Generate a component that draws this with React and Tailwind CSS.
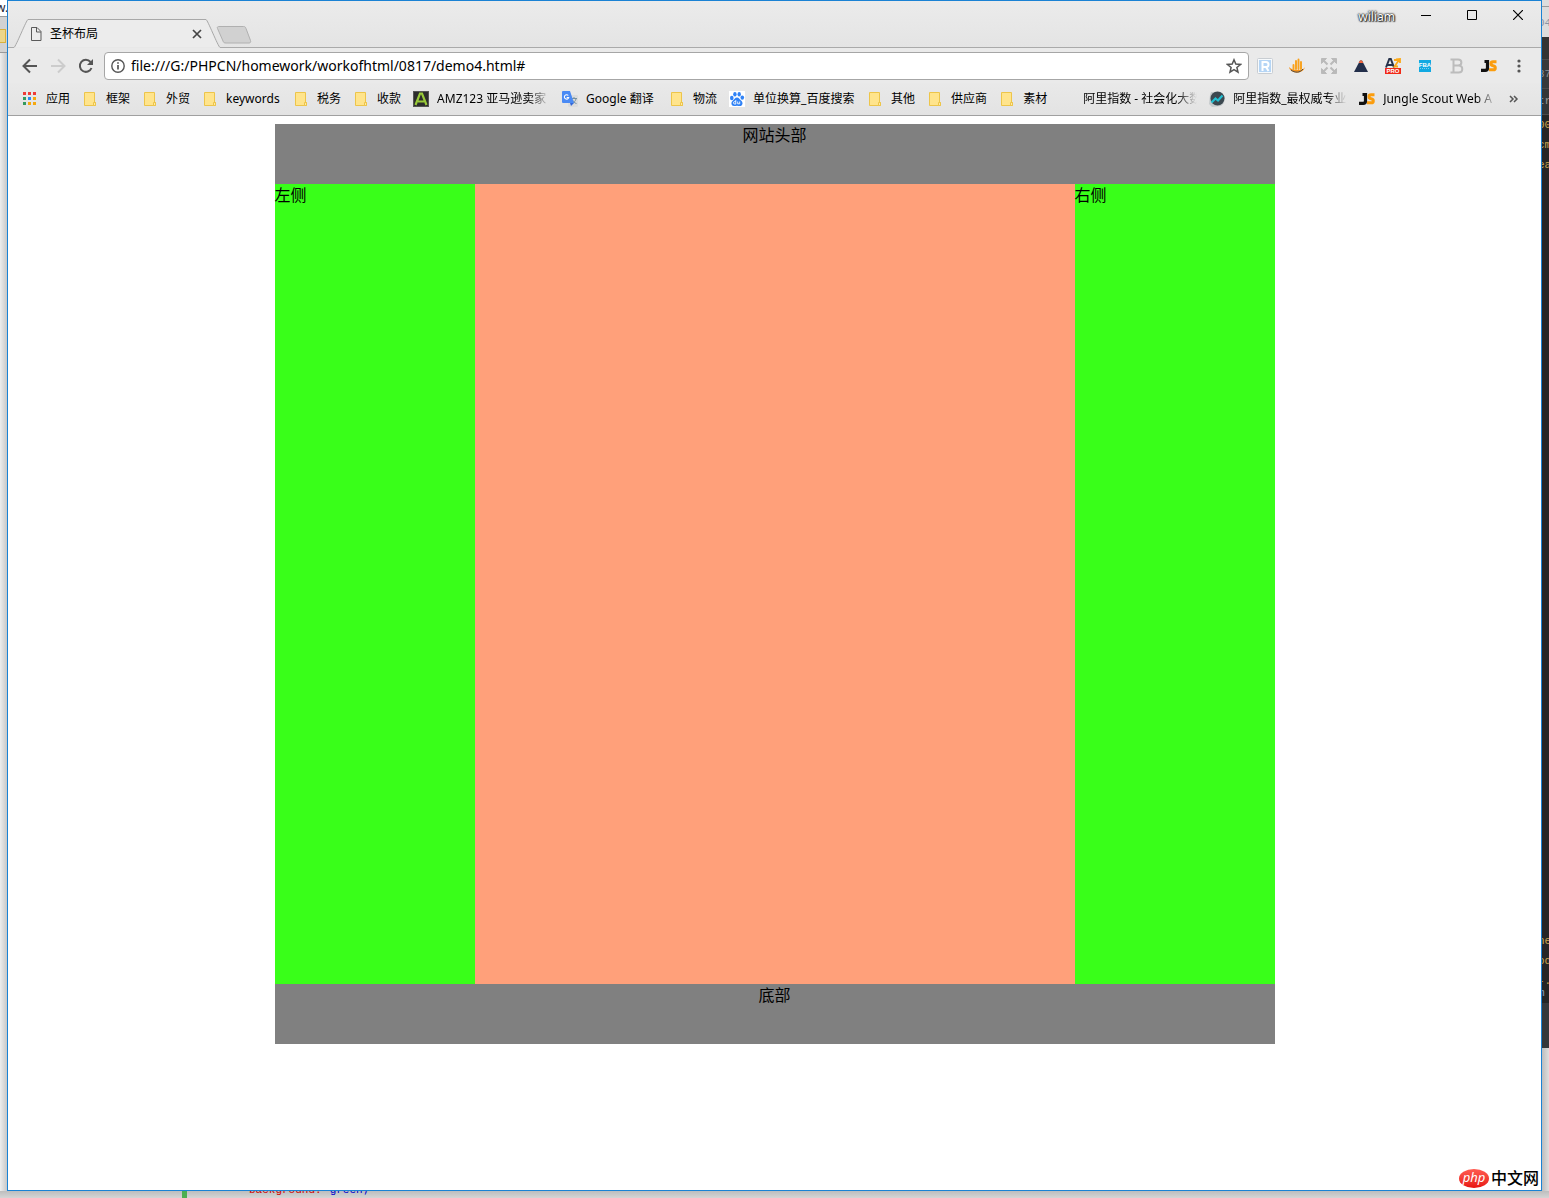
import React from "react";

const UI = "font-['Noto_Sans','Noto_Sans_CJK_SC',sans-serif]";

function FolderIcon() {
  return (
    <svg width="16" height="16" viewBox="0 0 16 16" aria-hidden="true">
      <path d="M2.5 1.5h10v10h1v3h-11z" fill="#ffe48c" stroke="#edc54a" />
      <path d="M11.5 14.5v-3h2v3z" fill="#ffe9a6" stroke="#edc54a" />
    </svg>
  );
}

function AppsIcon() {
  const colors = ["#ef3b36", "#ef3b36", "#ef3b36", "#349a5e", "#2a8bf2", "#f5a80f", "#349a5e", "#f5a80f", "#f5a80f"];
  return (
    <svg width="16" height="16" viewBox="0 0 16 16" aria-hidden="true">
      {colors.map((c, i) => (
        <rect key={i} x={1 + (i % 3) * 5} y={1 + Math.floor(i / 3) * 5} width="3" height="3" fill={c} />
      ))}
    </svg>
  );
}

function AmzIcon() {
  return (
    <svg width="16" height="16" viewBox="0 0 16 16" aria-hidden="true">
      <rect width="16" height="16" fill="#2d2d2d" />
      <rect x="0.5" y="0.5" width="15" height="15" fill="none" stroke="#555" />
      <path d="M2.500 14L7 2.500h2L13.500 14M5 10.500h6" fill="none" stroke="#9acb3a" strokeWidth="2.200" />
    </svg>
  );
}

function TranslateIcon() {
  return (
    <svg width="16" height="16" viewBox="0 0 16 16" aria-hidden="true">
      <rect x="6" y="4" width="10" height="12" rx="1" fill="#dcdcdc" />
      <path d="M9 7.5h6M12 6v1.500M14 8c-.5 2-2 3.500-4 4.500M10.500 9c1 2 2 3 4 3.500" stroke="#7590a0" fill="none" />
      <path d="M1 0h7l4 12H1a1 1 0 0 1-1-1V1a1 1 0 0 1 1-1z" fill="#4a8af4" />
      <path d="M8 12h4l-3 3z" fill="#3367d6" />
      <path d="M6.300 4.500A2.200 2.200 0 1 0 6.700 6.500H4.700" stroke="#fff" strokeWidth="1.100" fill="none" />
    </svg>
  );
}

function BaiduIcon() {
  return (
    <svg width="16" height="16" viewBox="0 0 16 16" aria-hidden="true">
      <rect width="16" height="16" fill="#fff" />
      <g fill="#2f82f6">
        <ellipse cx="2.800" cy="7" rx="1.800" ry="2.200" />
        <ellipse cx="5.900" cy="3.300" rx="1.700" ry="2.300" />
        <ellipse cx="10.200" cy="3.300" rx="1.700" ry="2.300" />
        <ellipse cx="13.300" cy="6.600" rx="1.800" ry="2.200" />
        <path d="M8 6.500c2 0 2.800 2 4.300 3.200 2.200 1.900 1.300 5.300-1.300 5.300-1.200 0-2-.3-3-.3s-1.800.3-3 .3c-2.800 0-3.400-3.400-1.300-5.200C5.200 8.500 6 6.500 8 6.500z" />
      </g>
      <path d="M6.800 9v4H5.700a1.200 1.200 0 0 1 0-2.400h1M8.700 10.500v2.300h2v-2.300" stroke="#fff" fill="none" strokeWidth="0.900" />
    </svg>
  );
}

function TrendIcon() {
  return (
    <svg width="16" height="16" viewBox="0 0 16 16" aria-hidden="true">
      <path d="M2 1h10l4 5-1 6-3 3-9 1-3-3 1-9z" fill="#c5cacc" />
      <circle cx="8.500" cy="7.500" r="7" fill="#3c4850" />
      <path d="M2.500 11.500l4-4 2.500 2 4.500-5" fill="none" stroke="#22bfd2" strokeWidth="2.200" />
    </svg>
  );
}

function JsIcon() {
  return (
    <svg width="16" height="16" viewBox="0 0 16 16" aria-hidden="true">
      <path d="M3.500 3.500h3V10c0 1.400-.9 2.300-2.300 2.300H0" fill="none" stroke="#111" strokeWidth="3.200" />
      <path d="M15.500 3.800h-3.500c-2.500 0-2.900 3.500.1 3.900 3 .4 2.800 4.100.2 4.100H8" fill="none" stroke="#fb9d0e" strokeWidth="3" />
    </svg>
  );
}

const fade = "overflow-hidden [mask-image:linear-gradient(to_right,black_82%,transparent)]";

const bookmarks = [
  { t: "应用", icon: AppsIcon },
  { t: "框架", icon: FolderIcon },
  { t: "外贸", icon: FolderIcon },
  { t: "keywords", icon: FolderIcon, w: "w-[55px]" },
  { t: "税务", icon: FolderIcon },
  { t: "收款", icon: FolderIcon },
  { t: "AMZ123 亚马逊卖家", icon: AmzIcon, w: "w-[113px] " + fade },
  { t: "Google 翻译", icon: TranslateIcon, w: "w-[71px]" },
  { t: "物流", icon: FolderIcon },
  { t: "单位换算_百度搜索", icon: BaiduIcon, w: "w-[102px]" },
  { t: "其他", icon: FolderIcon },
  { t: "供应商", icon: FolderIcon },
  { t: "素材", icon: FolderIcon },
  { t: "阿里指数 - 社会化大数", w: "w-[114px] " + fade },
  { t: "阿里指数_最权威专业", icon: TrendIcon, w: "w-[114px] " + fade },
  { t: "Jungle Scout Web A", icon: JsIcon, w: "w-[114px] " + fade },
];

const extensions = [
  {
    name: "R",
    art: (
      <>
        <rect x="0.500" y="0.500" width="15" height="15" rx="1" fill="#f7fafc" stroke="#c8cdd2" />
        <rect x="2" y="2" width="12" height="12" fill="#b5d5f5" />
        <path d="M5.500 13V4h3.500a2.300 2.300 0 0 1 0 5H6M9 9l2.500 4" stroke="#fff" strokeWidth="2" fill="none" />
      </>
    ),
  },
  {
    name: "Analytics",
    art: (
      <>
        <path d="M0 9c1 7 14 8 16 0-2 3-4 3-8 3s-6-1-8-3z" fill="#f7941d" />
        <path d="M2 12c4 3 9 3 12-1" stroke="#4b4b4b" fill="none" />
        <path d="M4.500 11V7M7 11V3M9.500 11V1.500M12 11V4" stroke="#f9a11b" strokeWidth="1.900" strokeLinecap="round" />
      </>
    ),
  },
  {
    name: "Expand",
    art: (
      <g fill="#bababa" stroke="#bababa">
        <path d="M.5.500h5l-5 5zM15.500.500h-5l5 5zM.5 15.500h5l-5-5zM15.500 15.500h-5l5-5z" />
        <path d="M2 2l4.500 4.500M14 2L9.500 6.500M2 14l4.500-4.500M14 14L9.500 9.500" strokeWidth="2" />
      </g>
    ),
  },
  {
    name: "Triangle",
    art: (
      <>
        <path d="M7 2.500h2l6 11.500H1z" fill="#232f4b" />
        <path d="M7 2.500h2l1.300 2.500H5.700z" fill="#f0643c" />
      </>
    ),
  },
  {
    name: "AZ Pro",
    art: (
      <>
        <path d="M1 9.500L4.300 1h1.500L9 9.500M2.500 7h5" stroke="#26324b" strokeWidth="2" fill="none" />
        <path d="M9 2h5L9.500 8.500H13M11 1.500l4-.5v4" stroke="#fba919" strokeWidth="1.800" fill="none" />
        <rect x="0" y="10" width="16" height="6" fill="#f02a17" />
        <text x="8" y="15.200" fontSize="6" fontWeight="700" textAnchor="middle" fontFamily="Liberation Sans" fill="#fff">PRO</text>
      </>
    ),
  },
  {
    name: "FBA",
    art: (
      <>
        <rect x="2" y="2" width="12" height="12" fill="#11a9e2" />
        <text x="8" y="8.500" fontSize="6" fontWeight="700" textAnchor="middle" fontFamily="Liberation Sans" fill="#fff">FBA</text>
        <path d="M3 10.500h10" stroke="#7fd0ef" strokeDasharray="1 1" />
      </>
    ),
  },
  {
    name: "B",
    art: (
      <path d="M1.500 1.500h7.500c4.500 0 4.500 6 0 6H5h4.500c5 0 5 7 0 7h-8M4.500 1.500v13" fill="none" stroke="#bcbcbc" strokeWidth="2" />
    ),
  },
  { name: "Jungle Scout", component: JsIcon },
];

function IconButton({ label, className, children }) {
  return (
    <button aria-label={label} className={"flex h-7 shrink-0 items-center justify-center " + className}>
      {children}
    </button>
  );
}

function TabStrip() {
  return (
    <header className="flex h-[47px] justify-between bg-gradient-to-b from-[#ebebeb] to-[#e4e4e4]">
      <div className="flex min-w-0 flex-1 items-end">
        <div className="h-px w-1.5 bg-[#aaa]" />
        <div className="relative flex h-[29px] w-[206px] items-center pl-4 pr-[17px]">
          <svg className="absolute inset-0" width="206" height="29" viewBox="0 0 206 29" aria-hidden="true">
            <path d="M0 28.500C2 27.500 12.500.500 14 .500h178c1.500 0 12 27 14 28" fill="#ececec" stroke="#a8a8a8" />
          </svg>
          <svg className="relative shrink-0" width="12" height="14" viewBox="0 0 12 14" aria-hidden="true">
            <path d="M1.500.500h5.500l4 4v9h-9.500zM6.500.500v4.500h4.500" fill="none" stroke="#5a5a5a" />
          </svg>
          <span className="relative flex-1 pl-2 text-xs leading-4">圣杯布局</span>
          <button aria-label="Close tab" className="relative">
            <svg width="12" height="12" viewBox="0 0 12 12">
              <path d="M2 2l8 8M10 2l-8 8" stroke="#444" strokeWidth="1.700" />
            </svg>
          </button>
        </div>
        <div className="flex h-[22px] flex-1 items-start border-b border-[#aaa]">
          <button aria-label="New tab" className="-ml-1">
            <svg width="36" height="18" viewBox="0 0 36 18">
              <path d="M2.500.500h25c2 0 2 1 2.500 2l4.500 12c.5 1.500 0 2.500-1.500 2.500H10c-2 0-2.500-.5-3-2L1.500 2.500c-.5-1 0-2 1-2z" fill="#d1d1d1" stroke="#b0b0b0" />
            </svg>
          </button>
        </div>
      </div>
      <div className="flex items-start border-b border-[#aaa]">
        <span className="mr-2 mt-2 text-xs leading-4 text-white [text-shadow:0_0_2px_#222,0_0_1px_#222,0_0_2px_#222,1px_1px_1px_#444]">wiliam</span>
        <IconButton label="Minimize" className="w-[46px]">
          <svg width="10" height="10" viewBox="0 0 10 10"><path d="M0 5.500h10" stroke="#000" /></svg>
        </IconButton>
        <IconButton label="Maximize" className="w-[46px]">
          <svg width="10" height="10" viewBox="0 0 10 10"><path d="M.5.500h9v9h-9z" fill="none" stroke="#000" /></svg>
        </IconButton>
        <IconButton label="Close" className="w-[46px]">
          <svg width="10" height="10" viewBox="0 0 10 10"><path d="M0 0l10 10M10 0L0 10" stroke="#000" strokeWidth="1.200" /></svg>
        </IconButton>
      </div>
    </header>
  );
}

function Toolbar() {
  return (
    <div className="flex h-[35px] items-center bg-[#eaeaea] px-2">
      <IconButton label="Back" className="w-7">
        <svg width="16" height="16" viewBox="0 0 16 16"><path d="M15 8H2M8 1.500L1.500 8 8 14.500" fill="none" stroke="#555" strokeWidth="2" /></svg>
      </IconButton>
      <IconButton label="Forward" className="w-7">
        <svg width="16" height="16" viewBox="0 0 16 16"><path d="M1 8h13M8 1.500L14.500 8 8 14.500" fill="none" stroke="#ccc" strokeWidth="2" /></svg>
      </IconButton>
      <IconButton label="Reload" className="w-7">
        <svg width="16" height="16" viewBox="0 0 16 16">
          <path d="M13.500 10A6 6 0 1 1 12.500 4" fill="none" stroke="#555" strokeWidth="2" />
          <path d="M15 1v6H9z" fill="#555" />
        </svg>
      </IconButton>
      <div className="ml-1 flex h-7 min-w-0 flex-1 items-center rounded-sm border border-[#a6a6a6] bg-white px-1.5">
        <svg className="shrink-0" width="14" height="14" viewBox="0 0 14 14" aria-hidden="true">
          <circle cx="7" cy="7" r="6.200" fill="none" stroke="#555" strokeWidth="1.400" />
          <path d="M7 6v4.500M7 3.300v1.500" stroke="#555" strokeWidth="1.700" />
        </svg>
        <input
          aria-label="Address"
          className="ml-1.5 min-w-0 flex-1 bg-transparent text-sm leading-5 text-black outline-none"
          defaultValue="file:///G:/PHPCN/homework/workofhtml/0817/demo4.html#"
        />
        <button aria-label="Bookmark this page">
          <svg width="16" height="16" viewBox="0 0 16 16">
            <path d="M8 1.800l1.800 4.300 4.700.4-3.600 3 1.100 4.600L8 11.700l-4 2.400 1.100-4.600-3.600-3 4.700-.4z" fill="none" stroke="#555" strokeWidth="1.500" />
          </svg>
        </button>
      </div>
      {extensions.map((e) => (
        <IconButton key={e.name} label={e.name} className="w-8">
          {e.component ? <e.component /> : <svg width="16" height="16" viewBox="0 0 16 16">{e.art}</svg>}
        </IconButton>
      ))}
      <IconButton label="Menu" className="w-7">
        <svg width="4" height="14" viewBox="0 0 4 14"><g fill="#555"><circle cx="2" cy="2" r="1.600" /><circle cx="2" cy="7" r="1.600" /><circle cx="2" cy="12" r="1.600" /></g></svg>
      </IconButton>
    </div>
  );
}

function BookmarksBar() {
  return (
    <nav className="flex h-[33px] items-center gap-3 overflow-hidden border-b border-[#a0a0a0] bg-gradient-to-b from-[#e9e9e9] to-[#e3e3e3] pl-3.5 pr-5">
      {bookmarks.map((b) => (
        <a key={b.t} href="#" className="flex shrink-0 items-center gap-2 whitespace-nowrap text-xs leading-4 text-black">
          <span className="size-4">{b.icon && <b.icon />}</span>
          <span className={b.w}>{b.t}</span>
        </a>
      ))}
      <button aria-label="More bookmarks">
        <svg width="10" height="8" viewBox="0 0 10 8"><path d="M1 1l3 3-3 3M5 1l3 3-3 3" fill="none" stroke="#555" strokeWidth="1.500" /></svg>
      </button>
    </nav>
  );
}

function GrailPage() {
  return (
    <main className="relative flex-1 bg-white px-2 pt-2 text-base leading-[22px] text-black">
      <div className="mx-auto max-w-[1000px]">
        <div className="h-[60px] bg-[#808080] text-center">网站头部</div>
        <div className="flex h-[800px]">
          <div className="w-1/5 bg-[#39ff19]">左侧</div>
          <div className="flex-1 bg-[#ffa07a]" />
          <div className="w-1/5 bg-[#39ff19]">右侧</div>
        </div>
        <div className="h-[60px] bg-[#808080] text-center">底部</div>
      </div>
      <div className="absolute bottom-0.5 right-0.5 flex items-center gap-0.5">
        <span className="flex h-[19px] w-[30px] items-center justify-center rounded-[50%] bg-gradient-to-b from-[#ff5a50] to-[#e80c0c] pb-0.5 text-[13px] italic leading-4 text-white">php</span>
        <span className="text-base font-medium leading-5">中文网</span>
      </div>
    </main>
  );
}

function LeftBackdrop() {
  return (
    <div className="flex w-[7px] shrink-0 flex-col overflow-hidden bg-gradient-to-r from-[#eee] to-[#c8c8c8] text-xs leading-4">
      <div className="h-4 -indent-1 bg-white text-[#223]">w.</div>
      <div className="h-[37px] border-y border-[#999] bg-[#d2d2d2] pt-3">
        <div className="h-3.5 w-1.5 border border-l-0 border-[#d9b13b] bg-[#ecd68a]" />
      </div>
    </div>
  );
}

function RightBackdrop() {
  return (
    <div className="flex w-[7px] shrink-0 flex-col overflow-hidden bg-gradient-to-r from-[#bdbdbd] to-[#dedede] -indent-1 font-['Liberation_Mono',monospace] text-[11px] leading-5">
      <div className="h-[7px] border-b border-[#999] bg-[#ddd]" />
      <div className="h-[30px] bg-[#dcdcdc] pt-1.5 text-[#8a93a5]">04</div>
      <div className="h-[22px] bg-[#333]" />
      <div className="h-[30px] border-y border-[#4a4a4a] bg-[#37393b] pt-1 text-[#8c9196]">37</div>
      <div className="h-[26px] border-b border-[#4a4a4a] bg-[#333537] pt-0.5 text-[#9a9a9a]">tr</div>
      <div className="flex h-[888px] flex-col justify-between bg-[#252525] text-[#c9a552]">
        <div>
          <div>00</div>
          <div>cm</div>
          <div>ea</div>
        </div>
        <div>
          <div>ne</div>
          <div>od</div>
          <div className="h-3">-..</div>
          <div className="text-[#8fa5c4]">m</div>
        </div>
      </div>
      <div className="h-[45px] bg-[#35373a]" />
    </div>
  );
}

export default function App() {
  return (
    <div className={"flex h-screen flex-col overflow-hidden bg-[#ccc] text-black " + UI}>
      <div className="flex min-h-0 flex-1">
        <LeftBackdrop />
        <div className="flex min-w-0 flex-1 flex-col border border-[#1a82d4]">
          <TabStrip />
          <Toolbar />
          <BookmarksBar />
          <GrailPage />
        </div>
        <RightBackdrop />
      </div>
      <div className="flex h-[7px] shrink-0 items-start overflow-hidden bg-gradient-to-b from-[#bdbdbd] to-[#d5d5d5] pl-[182px]">
        <div className="h-full w-[5px] bg-[#4caf50]" />
        <div className="flex h-full items-end gap-2 pl-[62px] font-['Liberation_Mono',monospace] text-[11px] leading-4">
          <span className="text-[#c00]">background:</span>
          <span className="text-[#00c]">green;</span>
        </div>
      </div>
    </div>
  );
}
